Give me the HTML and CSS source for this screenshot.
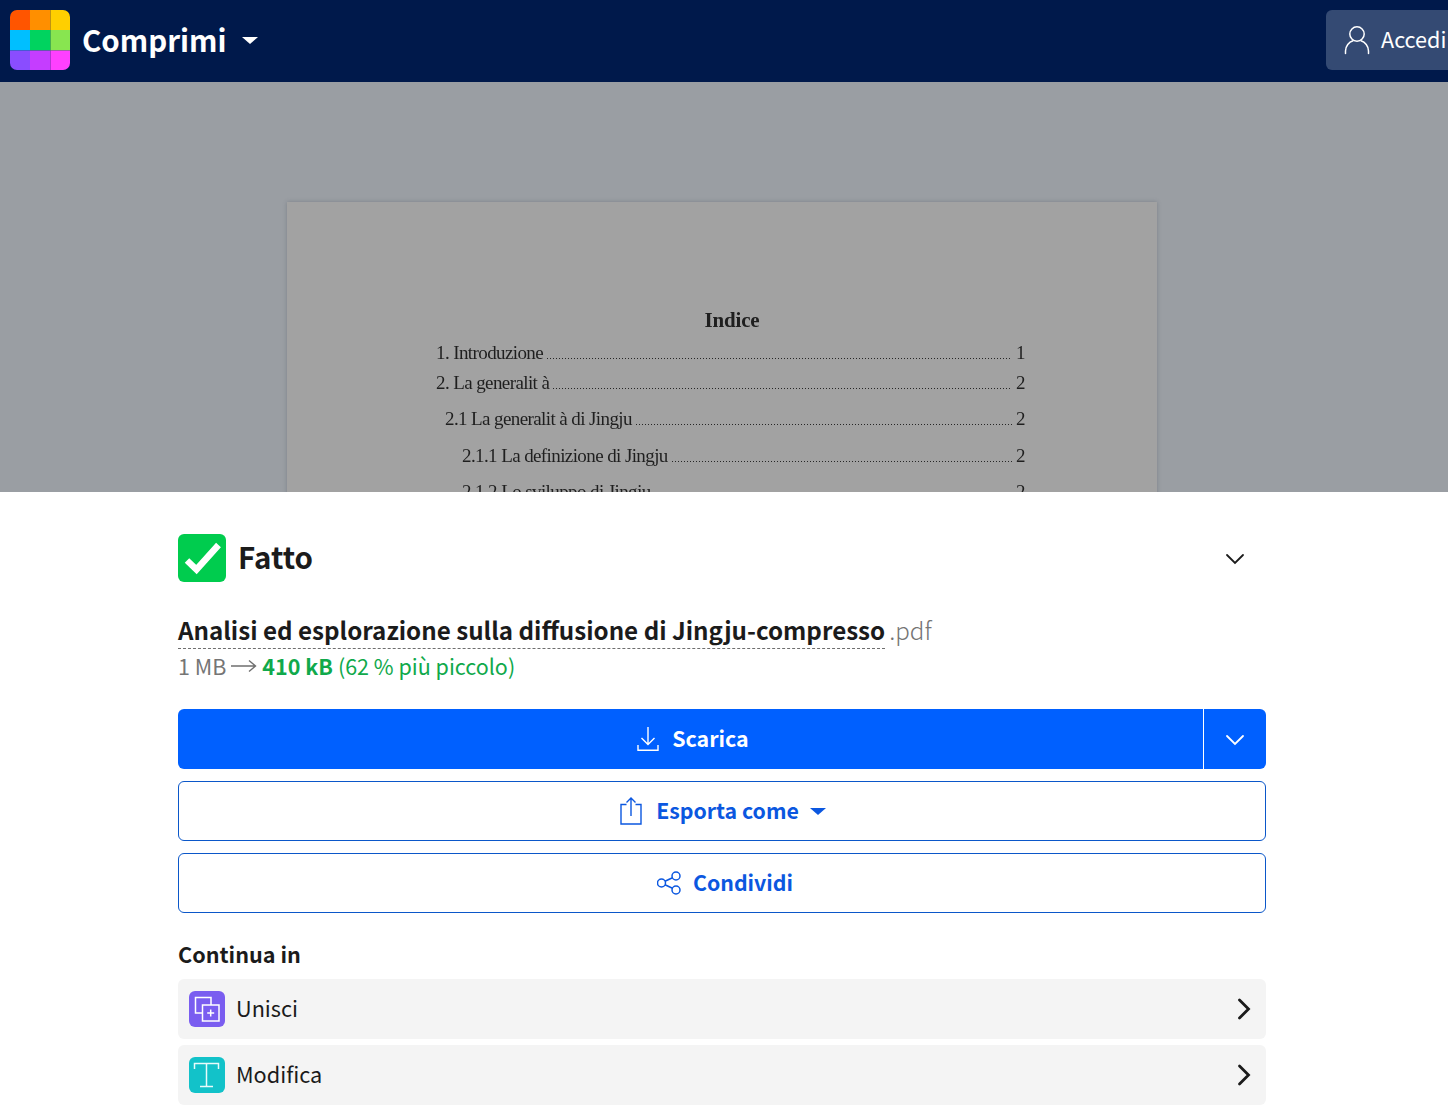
FILE: index.html
```html
<!DOCTYPE html>
<html lang="it">
<head>
<meta charset="utf-8">
<title>Comprimi</title>
<link rel="stylesheet" href="styles.css">
</head>
<body>
<header class="topbar">
  <div class="brand">
    <svg class="logo" width="60" height="60" viewBox="0 0 60 60">
      <defs><clipPath id="lc"><rect width="60" height="60" rx="7"/></clipPath></defs>
      <g clip-path="url(#lc)">
        <rect width="20" height="20" fill="#ff5500"/><rect x="20" width="20.5" height="20" fill="#ff8f00"/><rect x="40.5" width="19.5" height="20" fill="#ffcf00"/>
        <rect y="20" width="20" height="20.5" fill="#00bfff"/><rect x="20" y="20" width="20.5" height="20.5" fill="#00d35f"/><rect x="40.5" y="20" width="19.5" height="20.5" fill="#88e550"/>
        <rect y="40.5" width="20" height="19.5" fill="#8a4dff"/><rect x="20" y="40.5" width="20.5" height="19.5" fill="#c53dff"/><rect x="40.5" y="40.5" width="19.5" height="19.5" fill="#ff40ff"/>
      </g>
    </svg>
    <span class="brand-name">Comprimi</span>
    <span class="caret caret-white"></span>
  </div>
  <div class="login">
    <svg class="login-icon" width="26" height="30" viewBox="0 0 26 30" fill="none" stroke="#fff" stroke-width="1.5" stroke-linecap="round">
      <circle cx="13" cy="9" r="7.2"/>
      <path d="M1.5 28.5v-2.5c0-5 3.5-9 7.5-10.300M24.500 28.500v-2.500c0-5-3.500-9-7.500-10.300"/>
    </svg>
    <span class="login-label">Accedi</span>
  </div>
</header>

<section class="preview">
  <article class="paper">
    <h2 class="toc-title">Indice</h2>
    <div class="toc-row toc-a"><span>1. Introduzione</span><i class="dots"></i><span>1</span></div>
    <div class="toc-row toc-b"><span>2. La generalit à</span><i class="dots"></i><span>2</span></div>
    <div class="toc-row toc-c"><span>2.1 La generalit à di Jingju</span><i class="dots"></i><span>2</span></div>
    <div class="toc-row toc-d"><span>2.1.1 La definizione di Jingju</span><i class="dots"></i><span>2</span></div>
    <div class="toc-row toc-e"><span>2.1.2 Lo sviluppo di Jingju</span><i class="dots"></i><span>2</span></div>
  </article>
</section>

<main class="sheet">
  <div class="status">
    <div class="status-left">
      <svg width="48" height="48" viewBox="0 0 48 48">
        <rect width="48" height="48" rx="6" fill="#00cc4e"/>
        <path d="M9 26.500 18.500 35.500 40.500 11" fill="none" stroke="#fff" stroke-width="6.500"/>
      </svg>
      <h1 class="status-text">Fatto</h1>
    </div>
    <svg class="chevron-down" width="20" height="12" viewBox="0 0 20 12" fill="none" stroke="#1b1b1b" stroke-width="1.800" stroke-linecap="round"><path d="M2 2l8 8 8-8"/></svg>
  </div>

  <div class="filename"><span class="file-base">Analisi ed esplorazione sulla diffusione di Jingju-compresso</span><span class="file-ext">.pdf</span></div>
  <div class="sizes">
    <span class="size-old">1 MB</span>
    <svg class="size-arrow" width="26" height="14" viewBox="0 0 26 14" fill="none" stroke="#6f6f6f" stroke-width="1.400"><path d="M0 7h24M18 1.500 24.500 7 18 12.500"/></svg>
    <span class="size-new">410 kB</span>
    <span class="size-pct">(62 % più piccolo)</span>
  </div>

  <div class="download">
    <button class="btn-main">
      <svg width="22" height="26" viewBox="0 0 22 26" fill="none" stroke="#fff" stroke-width="1.400"><path d="M11 1v17M4.500 12 11 18.500 17.500 12M1 19v5.300h20V19"/></svg>
      <span class="btn-label">Scarica</span>
    </button>
    <button class="btn-side" aria-label="Altro">
      <svg class="chevron-down" width="20" height="12" viewBox="0 0 20 12" fill="none" stroke="#fff" stroke-width="1.800" stroke-linecap="round"><path d="M2 2l8 8 8-8"/></svg>
    </button>
  </div>

  <button class="btn-outline btn-export">
    <svg width="22" height="28" viewBox="0 0 22 28" fill="none" stroke="#0b57e0" stroke-width="1.400"><path d="M6.500 7.500H1v19.500h20V7.500h-5.500M11 19V1M6.500 5.500 11 1l4.500 4.500"/></svg>
    <span class="btn-label">Esporta come</span>
    <span class="caret caret-blue"></span>
  </button>
  <button class="btn-outline btn-share">
    <svg width="24" height="24" viewBox="1 0 24 24" fill="none" stroke="#0b57e0" stroke-width="1.500"><circle cx="5.500" cy="12" r="4"/><circle cx="20" cy="5" r="4"/><circle cx="20" cy="19" r="4"/><path d="M9 10.200 16.500 6.700M9 13.800 16.500 17.300"/></svg>
    <span class="btn-label">Condividi</span>
  </button>

  <h3 class="continue-title">Continua in</h3>
  <div class="tool-list">
    <a class="tool">
      <svg class="tool-icon" width="36" height="36" viewBox="0 0 36 36">
        <rect width="36" height="36" rx="6" fill="#7a5df0"/>
        <g fill="none" stroke="#fff" stroke-width="1.500"><path d="M22 14V6.500H6.500V22H14"/><rect x="13.500" y="14" width="16.500" height="16"/><path d="M21.700 18.500v7M18.200 22h7"/></g>
      </svg>
      <span class="tool-name">Unisci</span>
      <svg width="14" height="22" viewBox="0 0 14 22" fill="none" stroke="#1b1b1b" stroke-width="2.800" stroke-linecap="round"><path d="M2.500 2l9 9-9 9"/></svg>
    </a>
    <a class="tool">
      <svg class="tool-icon" width="36" height="36" viewBox="0 0 36 36">
        <rect width="36" height="36" rx="6" fill="#12c2c9"/>
        <g fill="none" stroke="#e8fbfb" stroke-width="1.500"><path d="M5.500 12V6.500h24V12M17.500 6.500v23M11 29.500h13"/></g>
      </svg>
      <span class="tool-name">Modifica</span>
      <svg width="14" height="22" viewBox="0 0 14 22" fill="none" stroke="#1b1b1b" stroke-width="2.800" stroke-linecap="round"><path d="M2.500 2l9 9-9 9"/></svg>
    </a>
  </div>
</main>
</body>
</html>
```

FILE: styles.css
```css
* { box-sizing: border-box; }
html, body { margin: 0; height: 1105px; overflow: hidden; }
body {
  background: #fff;
  font-family: "Noto Sans CJK SC", "Noto Sans", sans-serif;
  color: #1b1b1b;
}

.topbar {
  height: 82px;
  background: #00194b;
  display: flex;
  align-items: center;
  justify-content: space-between;
  padding: 0 0 2px 10px;
}
.brand { display: flex; align-items: center; }
.logo { display: block; }
.brand-name {
  color: #fff;
  font-size: 29.5px;
  font-weight: 700;
  line-height: 40px;
  margin-left: 12px;
  padding-bottom: 2px;
}
.caret {
  width: 0;
  height: 0;
  border-left: 8px solid transparent;
  border-right: 8px solid transparent;
}
.caret-white { border-top: 7px solid #fff; margin-left: 15px; }
.caret-blue { border-top: 7px solid #0b57e0; margin-left: -3px; }
.login {
  width: 122px;
  height: 60px;
  background: #344a73;
  border-radius: 6px 0 0 6px;
  display: flex;
  align-items: center;
  gap: 11px;
  padding-left: 18px;
  color: #fff;
  font-size: 21.6px;
  white-space: nowrap;
  overflow: hidden;
}
.login-icon { flex: none; }
.login-label { padding-bottom: 3px; }

.preview {
  height: 410px;
  background: #9a9ea3;
  overflow: hidden;
  padding: 120px 291px 0 287px;
}
.paper {
  height: 400px;
  background: #a2a2a2;
  box-shadow: 0 0 4px rgba(70, 75, 85, 0.35);
  padding: 105px 132px 0 149px;
  font-family: "Liberation Serif", serif;
  color: #1f1f1f;
  filter: blur(0.5px);
}
.toc-title {
  margin: 0;
  padding-left: 3px;
  text-align: center;
  font-size: 21px;
  line-height: 26px;
  font-weight: 700;
  letter-spacing: -0.2px;
}
.toc-row {
  display: flex;
  align-items: baseline;
  font-size: 19px;
  line-height: 24px;
  letter-spacing: -0.6px;
}
.dots {
  flex: 1;
  height: 1px;
  margin: 0 4px;
  background: repeating-linear-gradient(90deg, #262626 0 1px, transparent 1px 3px);
}
.toc-a { margin-top: 8px; }
.toc-b { margin-top: 6px; }
.toc-c { margin-top: 12px; padding-left: 9px; }
.toc-d { margin-top: 13px; padding-left: 26px; }
.toc-e { margin-top: 12px; padding-left: 26px; }

.sheet {
  height: 613px;
  background: #fff;
  padding: 42px 182px 0 178px;
}
.status {
  height: 48px;
  display: flex;
  align-items: center;
  justify-content: space-between;
  padding-right: 21px;
}
.status-left { display: flex; align-items: center; gap: 12px; }
.status-left svg { display: block; }
.status-text {
  margin: 0;
  font-size: 29.5px;
  line-height: 44px;
  padding-bottom: 4px;
  font-weight: 700;
}
.chevron-down { margin-top: 2px; }
.filename {
  margin-top: 31px;
  height: 37px;
  font-size: 24.17px;
  line-height: 34px;
  white-space: nowrap;
}
.file-base {
  display: inline-block;
  height: 36px;
  font-weight: 700;
  border-bottom: 1px dashed #6f6f6f;
}
.file-ext { color: #757575; margin-left: 4px; font-weight: 300; }
.sizes {
  height: 36px;
  padding-bottom: 4px;
  display: flex;
  align-items: center;
  gap: 5px;
  font-size: 21.5px;
  line-height: 32px;
  color: #757575;
  white-space: nowrap;
}
.size-new { color: #10a94b; font-weight: 700; }
.size-pct { color: #10a94b; }

.download { margin-top: 23px; display: flex; height: 60px; }
button {
  font-family: inherit;
  cursor: pointer;
  display: flex;
  align-items: center;
  justify-content: center;
}
.btn-label { padding-bottom: 4px; }
.btn-main, .btn-side {
  background: #0060ff;
  border: 0;
  color: #fff;
  font-size: 21.4px;
  font-weight: 700;
  height: 60px;
}
.btn-main {
  flex: 1;
  gap: 13px;
  padding-left: 11px;
  border-radius: 6px 0 0 6px;
  border-right: 1px solid #fff;
}
.btn-side {
  width: 62px;
  border-radius: 0 6px 6px 0;
}
.btn-outline {
  width: 100%;
  height: 60px;
  margin-top: 12px;
  background: #fff;
  border: 1px solid #0b57c9;
  border-radius: 6px;
  color: #0b57e0;
  font-size: 21.3px;
  font-weight: 700;
}
.btn-export { gap: 14px; padding-left: 8px; }
.btn-share { gap: 12px; padding-left: 12px; }
.continue-title {
  margin: 24px 0 0;
  font-size: 21.6px;
  line-height: 34px;
  font-weight: 700;
}
.tool-list { margin-top: 8px; display: flex; flex-direction: column; gap: 6px; }
.tool {
  height: 60px;
  background: #f4f4f4;
  border-radius: 6px;
  display: flex;
  align-items: center;
  padding: 0 15px 0 11px;
}
.tool-icon { flex: none; display: block; }
.tool-name {
  flex: 1;
  margin-left: 11px;
  font-size: 21.7px;
  line-height: 36px;
  padding-bottom: 3px;
  color: #1b1b1b;
}
```
